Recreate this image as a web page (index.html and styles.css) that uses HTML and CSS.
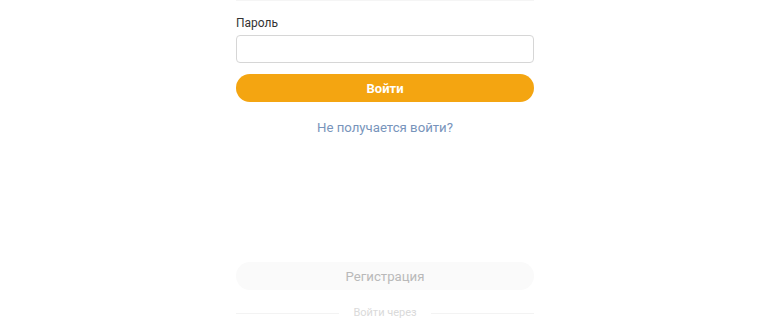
FILE: index.html
```html
<!DOCTYPE html>
<html lang="ru">
<head>
<meta charset="utf-8">
<link rel="stylesheet" href="styles.css">
</head>
<body>
<div class="form">
  <div class="prev"></div>
  <label class="label">Пароль</label>
  <div class="input"></div>
  <button class="btn-main">Войти</button>
  <a class="link">Не получается войти?</a>
  <div class="spacer"></div>
  <button class="btn-reg">Регистрация</button>
  <div class="divider"><span class="line"></span><span class="via">Войти через</span><span class="line"></span></div>
</div>
</body>
</html>
```
FILE: styles.css
```css
html, body { margin: 0; padding: 0; background: #fff; }
body { width: 770px; height: 330px; overflow: hidden; font-family: Roboto, "Noto Sans", sans-serif; }
.form { width: 298px; margin-left: 236px; display: flex; flex-direction: column; }
.prev { height: 2px; border-bottom: 1px solid #f5f5f5; margin-top: -2px; }
.label { margin-top: 15px; font-size: 12px; line-height: 14px; color: #333; }
.input { margin-top: 5px; height: 28px; box-sizing: border-box; border: 1px solid #d6d6d6; border-radius: 4px; background: #fff; }
.btn-main { margin-top: 11px; height: 28px; border: none; border-radius: 14px; background: #f4a511; color: #fff; font-family: Roboto, sans-serif; font-weight: 700; font-size: 13px; padding: 0; }
.link { margin-top: 18px; text-align: center; font-size: 13.2px; line-height: 16px; color: #7894bb; }
.spacer { height: 126px; }
.btn-reg { height: 28px; border: none; border-radius: 14px; background: #fafafa; color: #b9b9b9; font-family: Roboto, sans-serif; font-size: 13.2px; padding: 0; }
.divider { margin-top: 16px; display: flex; align-items: center; gap: 14px; }
.line { flex: 1; height: 1px; background: #f3f3f3; }
.via { font-size: 11px; line-height: 14px; color: #dadada; }
```
